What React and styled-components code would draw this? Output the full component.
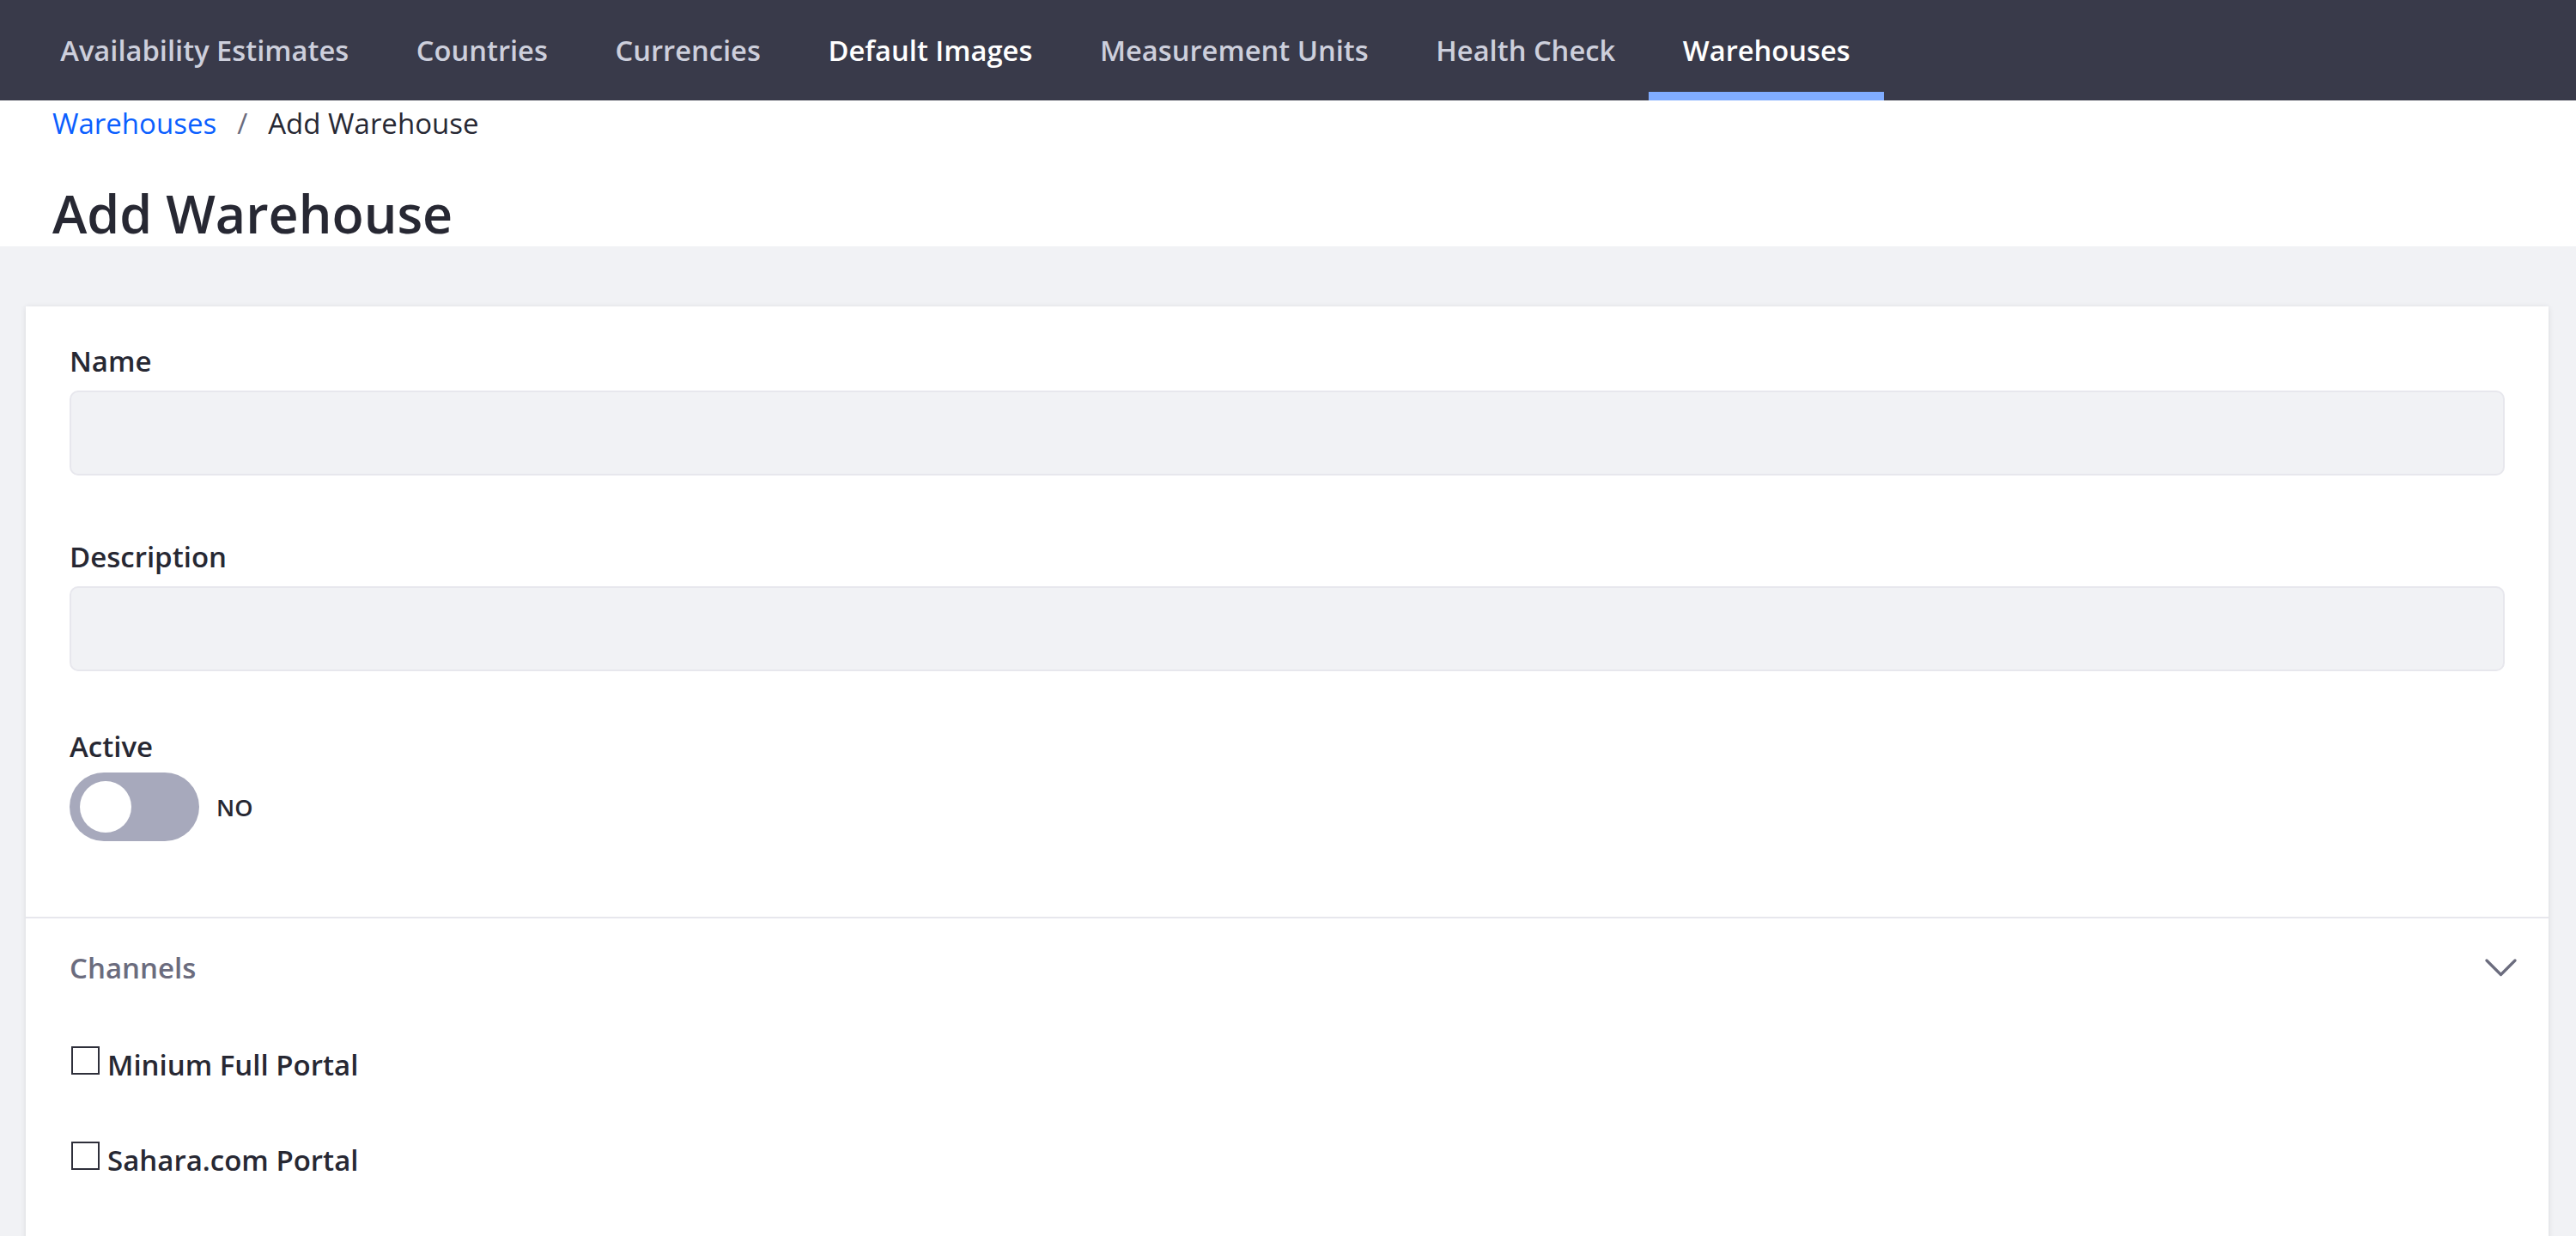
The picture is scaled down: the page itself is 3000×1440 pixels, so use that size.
import React from "react"
import styled, { createGlobalStyle } from "styled-components"

const GlobalStyle = createGlobalStyle`
  html, body {
    margin: 0;
    padding: 0;
  }
  body {
    font-family: "Open Sans", "Noto Sans", sans-serif;
    color: #272833;
    background: #f1f2f5;
  }
  * {
    box-sizing: border-box;
  }
`

const Page = styled.div`
  width: 3000px;
  height: 1440px;
  overflow: hidden;
  background: #f1f2f5;
`

const NavBar = styled.nav`
  display: flex;
  height: 117px;
  padding: 0 31px;
  background: #393a4a;
`

const Tab = styled.a`
  display: flex;
  align-items: center;
  padding: 0 39.3px;
  font-size: 32.7px;
  font-weight: 600;
  color: ${(p) => (p.$bright ? "#ffffff" : "#cdcfdc")};
  box-shadow: ${(p) => (p.$active ? "inset 0 -10px 0 #80acff" : "none")};
  white-space: nowrap;
`

const Header = styled.header`
  display: flex;
  flex-direction: column;
  height: 170px;
  padding: 2px 61px 0;
  background: #ffffff;
`

const Breadcrumb = styled.div`
  display: flex;
  align-items: center;
  gap: 24px;
  font-size: 33px;
  line-height: 50px;
`

const Crumb = styled.span`
  color: ${(p) => (p.$link ? "#0b5fff" : "#272833")};
`

const Sep = styled.span`
  color: #6b6c7e;
`

const Title = styled.h1`
  margin: 45px 0 0;
  font-size: 61px;
  font-weight: 600;
  line-height: 70px;
  color: #272833;
`

const Body = styled.main`
  padding: 70px 32px 0 30px;
`

const Card = styled.section`
  background: #ffffff;
  box-shadow: 0 1px 6px rgba(39, 40, 51, 0.12);
`

const Fields = styled.div`
  padding: 41px 51px 88px;
`

const Group = styled.div`
  margin-bottom: ${(p) => p.$gap || 0}px;
`

const Label = styled.label`
  display: block;
  margin-bottom: ${(p) => p.$gap || 12}px;
  font-size: 33px;
  font-weight: 600;
  line-height: 45px;
`

const Input = styled.input`
  display: block;
  width: 100%;
  height: 99px;
  border: 2px solid #e7e7ed;
  border-radius: 10px;
  background: #f1f2f5;
  outline: none;
`

const ToggleRow = styled.div`
  display: flex;
  align-items: center;
  gap: 20px;
`

const Toggle = styled.span`
  display: flex;
  align-items: center;
  width: 151px;
  height: 80px;
  padding: 0 12px;
  border-radius: 40px;
  background: #a7a9bc;
`

const Knob = styled.span`
  width: 60px;
  height: 60px;
  border-radius: 50%;
  background: #ffffff;
`

const ToggleText = styled.span`
  font-size: 27px;
  font-weight: 600;
`

const Panel = styled.div`
  border-top: 2px solid #e7e7ed;
  padding: 35px 0 80px;
`

const PanelHead = styled.div`
  display: flex;
  align-items: center;
  justify-content: space-between;
  padding: 0 37px 0 51px;
  margin-bottom: 68px;
`

const PanelTitle = styled.span`
  font-size: 33px;
  font-weight: 600;
  line-height: 45px;
  color: #6b6c7e;
`

const CheckRow = styled.label`
  display: flex;
  align-items: flex-start;
  gap: 9px;
  padding: 0 51px;
  margin-bottom: 66px;
  font-size: 33px;
  font-weight: 600;
  line-height: 45px;
`

const Box = styled.input`
  appearance: none;
  flex: none;
  width: 33px;
  height: 33px;
  margin: 1px 0 0 2px;
  border: 2px solid #2e2f3a;
  border-radius: 0;
  background: #ffffff;
`

const Chevron = () => (
  <svg width="37" height="22" viewBox="0 0 37 22" fill="none">
    <polyline
      points="2,2 18.5,18.5 35,2"
      stroke="#6b6c7e"
      strokeWidth="3.2"
      strokeLinecap="round"
      strokeLinejoin="round"
    />
  </svg>
)

const tabs = [
  { label: "Availability Estimates" },
  { label: "Countries" },
  { label: "Currencies" },
  { label: "Default Images", bright: true },
  { label: "Measurement Units" },
  { label: "Health Check" },
  { label: "Warehouses", bright: true, active: true },
]

const channels = ["Minium Full Portal", "Sahara.com Portal"]

export default function App() {
  return (
    <Page>
      <GlobalStyle />
      <NavBar>
        {tabs.map((t) => (
          <Tab key={t.label} $bright={t.bright} $active={t.active}>
            {t.label}
          </Tab>
        ))}
      </NavBar>
      <Header>
        <Breadcrumb>
          <Crumb $link>Warehouses</Crumb>
          <Sep>/</Sep>
          <Crumb>Add Warehouse</Crumb>
        </Breadcrumb>
        <Title>Add Warehouse</Title>
      </Header>
      <Body>
        <Card>
          <Fields>
            <Group $gap={72}>
              <Label>Name</Label>
              <Input type="text" />
            </Group>
            <Group $gap={65}>
              <Label>Description</Label>
              <Input type="text" />
            </Group>
            <Group>
              <Label $gap={8}>Active</Label>
              <ToggleRow>
                <Toggle>
                  <Knob />
                </Toggle>
                <ToggleText>NO</ToggleText>
              </ToggleRow>
            </Group>
          </Fields>
          <Panel>
            <PanelHead>
              <PanelTitle>Channels</PanelTitle>
              <Chevron />
            </PanelHead>
            {channels.map((c) => (
              <CheckRow key={c}>
                <Box type="checkbox" />
                {c}
              </CheckRow>
            ))}
          </Panel>
        </Card>
      </Body>
    </Page>
  )
}
